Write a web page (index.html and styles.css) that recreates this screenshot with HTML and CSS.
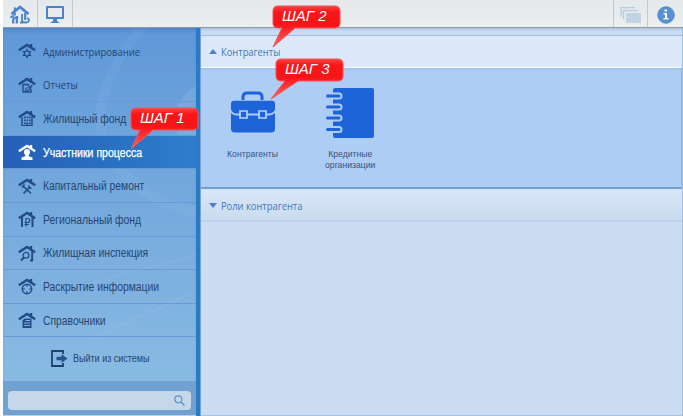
FILE: index.html
```html
<!DOCTYPE html>
<html lang="ru">
<head>
<meta charset="utf-8">
<title>Контрагенты</title>
<link rel="stylesheet" href="styles.css">
</head>
<body>
<div class="app">
  <header class="toolbar">
    <div class="tool tool-home">
      <svg width="20" height="20" viewBox="0 0 20 20" fill="none" stroke="#4a82cb">
        <path d="M1.500 9 10 2l8.500 7" stroke-width="2.800"/><path d="M5 6V2.500M4.800 8v2.500M3.200 18.500V15q0-2.500 3-2.500h2M6.800 11v7.500M15.200 8v7" stroke-width="2.200"/><path d="M12 9v6.500q0 2 2.500 2 4.500 0 4.500-2.500 0-1.500-2-2M1 13q0-2 3-2M10 17.500h3" stroke-width="1.800"/>
      </svg>
    </div>
    <div class="tool tool-monitor">
      <svg width="20" height="18" viewBox="0 0 20 18"><path fill="#4a82cb" fill-rule="evenodd" d="M2 0h16q1 0 1 1v11q0 1-1 1h-6v2l3 2H5l3-2v-2H2q-1 0-1-1V1q0-1 1-1zm1 2v9h14V2z"/></svg>
    </div>
    <div class="spacer"></div>
    <div class="tool tool-windows">
      <svg width="22" height="17" viewBox="0 0 22 17"><path d="M1 9.500V.7h14M3.500 12.500V3.700H18" fill="none" stroke="#b7cae0" stroke-width="1.300"/><path fill="#c2d3e5" d="M6 6h15v10H6z"/></svg>
    </div>
    <div class="tool tool-info">
      <svg width="18" height="18" viewBox="0 0 18 18"><circle cx="9" cy="9" r="8.300" fill="#5890d8" stroke="#3f78be" stroke-width=".7"/><path fill="#fff" d="M7.500 3.500h2.500v2H7.500zM6.500 7H10v5h1.500v1.500h-5V12H8V8.500H6.500z"/></svg>
    </div>
  </header>
  <div class="body">
    <aside class="sidebar">
      <svg class="glow" width="193" height="353" viewBox="0 0 193 353"><g fill="none" stroke="#fff"><path stroke-opacity=".045" stroke-width="10" d="M142-5Q88 60 99 105Q120 170 200 186"/><path stroke-opacity=".05" stroke-width="2" d="M88 255 200 225M90 310 200 260"/></g><circle cx="210" cy="92" r="38" fill="#fff" fill-opacity=".09"/></svg>
      <nav class="menu">
        <a class="item pt"><svg class="ico" viewBox="0 0 18 18"><use href="#roof"/><path d="m9 6.500 1.500 2.500 2.900-.1-1.300 2.600 1.300 2.600-2.900-.1L9 16.500 7.500 14l-2.900.1 1.300-2.600-1.300-2.600 2.900.1z" fill="currentColor"/><circle cx="9" cy="11.500" r="2" fill="#629bda"/></svg><span>Администрирование</span></a>
        <a class="item pt"><svg class="ico" viewBox="0 0 18 18"><use href="#roof"/><path d="M10.500 8.500H5v7.500h8v-3" fill="none" stroke="currentColor" stroke-width="1.400"/><path d="M10 8l1 3 2 .5-3 3-2.500.5.5-2.500 1.500-1M11 12l3.500-3" fill="none" stroke="currentColor" stroke-width="1.100"/></svg><span>Отчеты</span></a>
        <a class="item"><svg class="ico" viewBox="0 0 18 18"><use href="#roof"/><path d="M4 8v9M14 8v9" stroke="currentColor" stroke-width="1.500"/><path d="M6 7.500h1.700v1.700H6zm2.500 0h1.700v1.700H8.500zm2.500 0h1.700v1.700H11zM6 10.500h1.700v1.700H6zm2.500 0h1.700v1.700H8.500zm2.500 0h1.700v1.700H11zM6 13.500h1.700v1.700H6zm5 0h1.700v1.700H11zM8.300 13.500h2V17h-2zM4 16h10v1H4z" fill="currentColor"/></svg><span>Жилищный фонд</span></a>
        <a class="item active"><svg class="ico" viewBox="0 0 18 18"><use href="#roof"/><path d="M9 6q3 0 3 3.300 0 1.500-1.300 3v.9l3.800 1.300v2.500h-11v-2.500l3.800-1.300v-.9Q6 10.800 6 9.300 6 6 9 6" fill="currentColor"/></svg><span>Участники процесса</span></a>
        <a class="item"><svg class="ico" viewBox="0 0 18 18"><use href="#roof"/><path d="m5.500 9.500 7.500 7M12 10l-6.500 6.500M4 10.500l2.500-3M11 8.500v2.500h2.500" fill="none" stroke="currentColor" stroke-width="1.700"/></svg><span>Капитальный ремонт</span></a>
        <a class="item"><svg class="ico" viewBox="0 0 18 18"><use href="#roof"/><path d="M4 7v10M14.500 7v10" stroke="currentColor" stroke-width="2"/><path d="M8 16.500v-8h1.500q2.300 0 2.300 2t-2.300 2H6.500m0 2h4.500" fill="none" stroke="currentColor" stroke-width="1.200"/></svg><span>Региональный фонд</span></a>
        <a class="item"><svg class="ico" viewBox="0 0 18 18"><use href="#roof"/><path d="M14.200 6v11M12 16.500h3M5.800 13.500 3 16.500" fill="none" stroke="currentColor" stroke-width="1.900"/><circle cx="8" cy="11.300" r="2.900" fill="none" stroke="currentColor" stroke-width="1.200"/></svg><span>Жилищная инспекция</span></a>
        <a class="item"><svg class="ico" viewBox="0 0 18 18"><use href="#roof"/><circle cx="9" cy="12" r="4.700" fill="none" stroke="currentColor" stroke-width="1.500"/><path d="M9 7v3m0 4v3M4.500 12h2.500m4 0h2.500" stroke="currentColor"/></svg><span>Раскрытие информации</span></a>
        <a class="item"><svg class="ico" viewBox="0 0 18 18"><use href="#roof"/><path d="M6.500 7.500H13.500V17h-9V9.500z" fill="currentColor"/><path d="M7.500 9.500h4.500M6 12h6M6 14.500h6" stroke="#84b5e0"/></svg><span>Справочники</span></a>
      </nav>
      <a class="logout"><svg width="17" height="17" viewBox="0 0 17 17"><path d="M12 4V1H1v15h11v-3" fill="none" stroke="#203e75" stroke-width="1.800"/><path d="M5.500 6.700h5V4l6 4.500-6 4.500v-2.700h-5z" fill="#285193"/></svg><span>Выйти из системы</span></a>
      <div class="search"><div class="field"><svg width="11" height="11" viewBox="0 0 11 11" fill="none" stroke="#6290ca"><circle cx="4.300" cy="4.300" r="3.500" stroke-width="1.200"/><path d="m7 7 3.500 3.500" stroke-width="1.500"/></svg></div></div>
    </aside>
    <div class="divider"></div>
    <main class="main">
      <div class="strip"></div>
      <div class="head open"><i class="tri up"></i><span>Контрагенты</span></div>
      <div class="panel">
        <div class="card">
          <svg width="46" height="50" viewBox="0 0 46 50"><path d="M13 12V9q0-4 4-4h11q4 0 4 4v3" fill="none" stroke="#1d64d8" stroke-width="3"/><path d="M4 12.700h38q3 0 3 3V41q0 3.500-4 3.500H5q-4 0-4-3.500V15.700q0-3 3-3" fill="#1d64d8"/><path d="M0 21.500q2 5 7 5h31q6 0 8-5" fill="none" stroke="#aecdf5" stroke-width="1.800"/><path d="M10 23h7v7h-7zm19 0h7v7h-7z" fill="#1d64d8" stroke="#b7d4f7" stroke-width="1.700"/></svg>
          <span class="cap">Контрагенты</span>
        </div>
        <div class="card card-b">
          <svg width="48" height="50" viewBox="0 0 48 50"><path d="M9 0h37q2 0 2 2v46q0 2-2 2H9q-2 0-2-2V2q0-2 2-2" fill="#1d64d8"/><g fill="none" stroke-linecap="round"><path d="M2 8h11M2 19h11M2 30h11M2 41.500h11" stroke="#aecdf5" stroke-width="7"/><path d="M1.500 8H13M1.500 19H13M1.500 30H13M1.500 41.500H13" stroke="#1d64d8" stroke-width="3"/></g></svg>
          <span class="cap">Кредитные<br>организации</span>
        </div>
      </div>
      <div class="head shut"><i class="tri down"></i><span>Роли контрагента</span></div>
      <div class="rest"></div>
    </main>
  </div>
</div>
<div class="callout c1"><svg width="70" height="44" viewBox="0 0 70 44"><use href="#balloon"/></svg><b>ШАГ 1</b></div>
<div class="callout c2"><svg width="70" height="44" viewBox="0 0 70 44"><use href="#balloon"/></svg><b>ШАГ 2</b></div>
<div class="callout c3"><svg width="75" height="44" viewBox="-5 0 75 44"><use href="#balloon-left"/></svg><b>ШАГ 3</b></div>
<svg class="defs" width="0" height="0">
  <defs>
    <linearGradient id="red" x2="0" y2="1"><stop stop-color="#f44"/><stop offset=".15" stop-color="#fc1517"/><stop offset=".45" stop-color="#f91418"/><stop offset="1" stop-color="#f66"/></linearGradient>
    <path id="roof" d="M.8 8.300 9 3l8.200 5.300M13 2v4" fill="none" stroke="currentColor" stroke-width="2.400"/>
    <path id="balloon" fill="url(#red)" stroke="#ee5558" d="M6 1h57q5 0 5 5v12q0 5-5 5H23L1 42 10 23H6q-5 0-5-5V6q0-5 5-5z"/>
    <path id="balloon-left" fill="url(#red)" stroke="#ee5558" d="M6 1h57q5 0 5 5v12q0 5-5 5H23L-4 41 10 23H6q-5 0-5-5V6q0-5 5-5z"/>
  </defs>
</svg>
</body>
</html>
```
FILE: styles.css
```css
* { box-sizing: border-box; }
body { margin: 0; background: #fff; font-family: "Liberation Sans", sans-serif; width: 683px; height: 416px; overflow: hidden; }
.app { margin-left: 3px; height: 416px; display: flex; flex-direction: column; }
.toolbar { height: 28px; flex: none; display: flex; background: linear-gradient(#e5e9ec, #e9eced 70%, #eee); border-bottom: 1px solid #8d9aac; }
.tool { display: flex; align-items: center; justify-content: center; border-right: 1px solid #c5c8cc; }
.tool-home { width: 35px; padding-top: 2px; }
.tool-monitor { width: 35px; padding-top: 3px; }
.tool-windows { width: 35px; padding-top: 3px; border-left: 1px solid #c5c8cc; margin-left: auto; }
.tool-info { width: 35px; border: 0; padding-top: 2px; }
.spacer { flex: 1; }
.body { flex: 1; display: flex; min-height: 0; }
.sidebar { width: 193px; position: relative; display: flex; flex-direction: column; background: linear-gradient(#5f98d9, #6ea5dc 30%, #7caedf 60%, #8abde3 95%); box-shadow: inset 0 4px 4px -2px rgba(50,100,160,.45); }
.glow { position: absolute; left: 0; top: 0; }
.menu { padding-top: 7px; position: relative; }
.item { height: 33.600px; display: flex; align-items: center; gap: 7px; padding: 1px 0 0 15px; border-bottom: 1px solid #6c98d8; color: #26456f; font-size: 12px; white-space: nowrap; }
.item span { transform: scaleX(.86); transform-origin: left; }
.ico { width: 18px; height: 18px; color: #234b87; flex: none; margin-top: -1px; }
.item.pt { font-family: "Open Sans", "Noto Sans", sans-serif; font-size: 11px; padding-top: 0; }
.pt span { transform: scaleX(.865); }
.pt .ico { margin-top: 0; }
.active { color: #fff; background: linear-gradient(90deg, #245fb6, #2d7ecb); -webkit-text-stroke: .25px #fff; }
.active span { transform: scaleX(.88); }
.active .ico { color: #fff; }
.logout { height: 43px; display: flex; align-items: center; gap: 5px; padding-left: 48px; font-size: 10px; color: #26456f; white-space: nowrap; position: relative; }
.logout span { transform: scaleX(.9); transform-origin: left; }
.search { margin-top: auto; height: 35px; padding: 10px 5px 5px; background: #71a1d1; border-bottom: 1px solid #b6d0ec; position: relative; }
.field { height: 19px; border-radius: 4px; background: #c4d8e9; display: flex; align-items: center; justify-content: flex-end; padding-right: 6px; }
.divider { width: 4px; background: #2b7ac7; }
.main { flex: 1; display: flex; flex-direction: column; border-left: 1px solid #78a4d5; border-right: 1px solid #9fbee3; }
.strip { height: 8px; background: linear-gradient(#b1c4df, #cadcf4 50%); border-bottom: 1px solid #9fbee2; }
.head { display: flex; align-items: center; padding: 0 0 1px 8px; gap: 4px; color: #4278bd; font: 11px "Open Sans", "Noto Sans", sans-serif; white-space: nowrap; }
.head span { transform: scaleX(.85); transform-origin: left; }
.open { height: 31px; background: #dce8f8; }
.shut { height: 33px; background: linear-gradient(#d8e6f7, #cadcf0); border-bottom: 2px solid #bad0ec; padding-top: 2px; }
.tri { border: 4px solid transparent; }
.up { border-top: 0; border-bottom: 5px solid #4984cb; }
.down { border-bottom: 0; border-top: 5px solid #4984cb; }
.panel { height: 122px; border-top: 1px solid #fff; border-bottom: 2px solid #729fd2; border-right: 1px solid #8eb4e0; background: linear-gradient(#9bbfe9, #aecdf5 3px); display: flex; padding-top: 20px; }
.card { width: 103px; display: flex; flex-direction: column; align-items: center; gap: 11px; }
.card-b { width: 92px; }
.cap { font-size: 9px; line-height: 10.500px; color: #3b5279; text-align: center; transform: scaleX(.96); }
.rest { flex: 1; background: #ccdcf3; border-bottom: 1px solid #a9c4e5; }
.callout { position: absolute; z-index: 3; }
.callout svg { display: block; }
.callout b { position: absolute; top: 3px; left: 10px; font: italic 15px/16px "Liberation Sans", sans-serif; color: #fff; white-space: nowrap; }
.c1 { left: 130px; top: 107px; }
.c2 { left: 272px; top: 5px; }
.c3 { left: 270px; top: 58px; }
.c3 b { left: 15px; }
.defs { position: absolute; }
```
